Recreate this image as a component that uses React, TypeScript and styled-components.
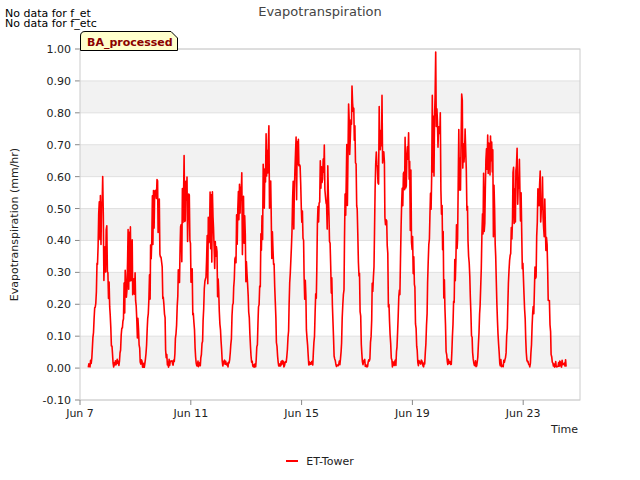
import React from 'react';
import styled, { createGlobalStyle } from 'styled-components';

const Global = createGlobalStyle`
  body { margin: 0; background: #fff; font-family: "DejaVu Sans", sans-serif; }
`;

const Page = styled.div`
  width: 640px;
  height: 480px;
  display: flex;
  flex-direction: column;
  overflow: hidden;
`;

const Header = styled.div`
  height: 30px;
  display: grid;
  grid-template-columns: 1fr auto 1fr;
`;

const Notes = styled.div`
  font-size: 11px;
  line-height: 10px;
  color: #000;
  padding: 9px 0 0 5px;
`;

const Title = styled.div`
  font-size: 13px;
  color: #444;
  padding-top: 4px;
`;

const Legend = styled.div`
  display: flex;
  justify-content: center;
  align-items: center;
  gap: 8px;
  height: 30px;
  font-size: 11px;
  color: #222;
  padding-bottom: 8px;
  box-sizing: border-box;
`;

const Swatch = styled.span`
  width: 12px;
  height: 2px;
  background: #f00;
`;

const X0 = 80, X1 = 580, Y0 = 49, Y1 = 400;
const xOf = (day: number) => X0 + (day - 7) * 27.7;
const yOf = (v: number) => Y1 - ((v + 0.1) / 1.1) * (Y1 - Y0);

const peaks: [number, number][] = [
  [7.8, 0.5], [8.8, 0.37], [9.75, 0.59], [10.8, 0.59], [11.75, 0.51], [12.8, 0.61],
  [13.75, 0.69], [14.85, 0.79], [15.8, 0.77], [16.8, 0.92], [17.85, 0.83], [18.8, 0.76],
  [19.85, 0.94], [20.8, 0.79], [21.75, 0.84], [22.75, 0.7], [23.65, 0.6],
];

let seed = 11;
const rnd = () => { seed = (seed * 16807) % 2147483647; return seed / 2147483647; };

const points: string[] = [];
for (let t = 7.3; t <= 24.55; t += 1 / 48) {
  let v = 0.015 + (rnd() - 0.5) * 0.025;
  for (const [tp, p] of peaks) {
    const d = (t - tp) / 0.4;
    if (Math.abs(d) < 1) {
      const base = Math.pow(Math.cos((d * Math.PI) / 2), 1.3);
      v += p * base * (0.72 + rnd() * 0.28) + (rnd() - 0.5) * 0.2 * base;
    }
  }
  points.push(`${xOf(t).toFixed(1)},${yOf(v).toFixed(1)}`);
}

const ticks = [-0.1, 0, 0.1, 0.2, 0.3, 0.4, 0.5, 0.6, 0.7, 0.8, 0.9, 1.0];
const dates = [['Jun 7', 7], ['Jun 11', 11], ['Jun 15', 15], ['Jun 19', 19], ['Jun 23', 23]] as const;

export default function App() {
  return (
    <Page>
      <Global />
      <Header>
        <Notes>No data for f_et<br />No data for f_etc</Notes>
        <Title>Evapotranspiration</Title>
        <div />
      </Header>
      <svg width="640" height="420" viewBox="0 30 640 420" style={{ display: 'block' }} fontFamily="DejaVu Sans, sans-serif">
        {[0, 0.2, 0.4, 0.6, 0.8].map(b => (
          <rect key={b} x={X0} y={yOf(b + 0.1)} width={X1 - X0} height={yOf(b) - yOf(b + 0.1)} fill="#f2f2f2" />
        ))}
        {ticks.map(t => (
          <g key={t}>
            <line x1={X0} x2={X1} y1={yOf(t)} y2={yOf(t)} stroke="#e0e0e0" />
            <line x1={X0 - 5} x2={X0} y1={yOf(t)} y2={yOf(t)} stroke="#888" />
            <text x={X0 - 9} y={yOf(t) + 4} fontSize="11" textAnchor="end" fill="#222">{t.toFixed(2)}</text>
          </g>
        ))}
        <rect x={X0} y={Y0} width={X1 - X0} height={Y1 - Y0} fill="none" stroke="#ccc" />
        {dates.map(([l, d]) => (
          <g key={l}>
            <line x1={xOf(d)} x2={xOf(d)} y1={Y1} y2={Y1 + 5} stroke="#888" />
            <text x={xOf(d)} y={Y1 + 17} fontSize="11" textAnchor="middle" fill="#222">{l}</text>
          </g>
        ))}
        <text x="578" y="433" fontSize="11" textAnchor="end" fill="#222">Time</text>
        <text transform={`translate(18 ${(Y0 + Y1) / 2}) rotate(-90)`} fontSize="11" textAnchor="middle" fill="#222">Evapotranspiration (mm/hr)</text>
        <polyline points={points.join(' ')} fill="none" stroke="#f00" strokeWidth="1.6" strokeLinejoin="round" />
        <path d="M80.5 50.5 V36 Q80.5 31.5 85 31.5 H171 L177.5 38 V50.5 Z" fill="#ffffcc" stroke="#000" strokeWidth="1" />
        <text x="87" y="46" fontSize="11" fontWeight="bold" fill="#8b0000">BA_processed</text>
      </svg>
      <Legend><Swatch />ET-Tower</Legend>
    </Page>
  );
}
